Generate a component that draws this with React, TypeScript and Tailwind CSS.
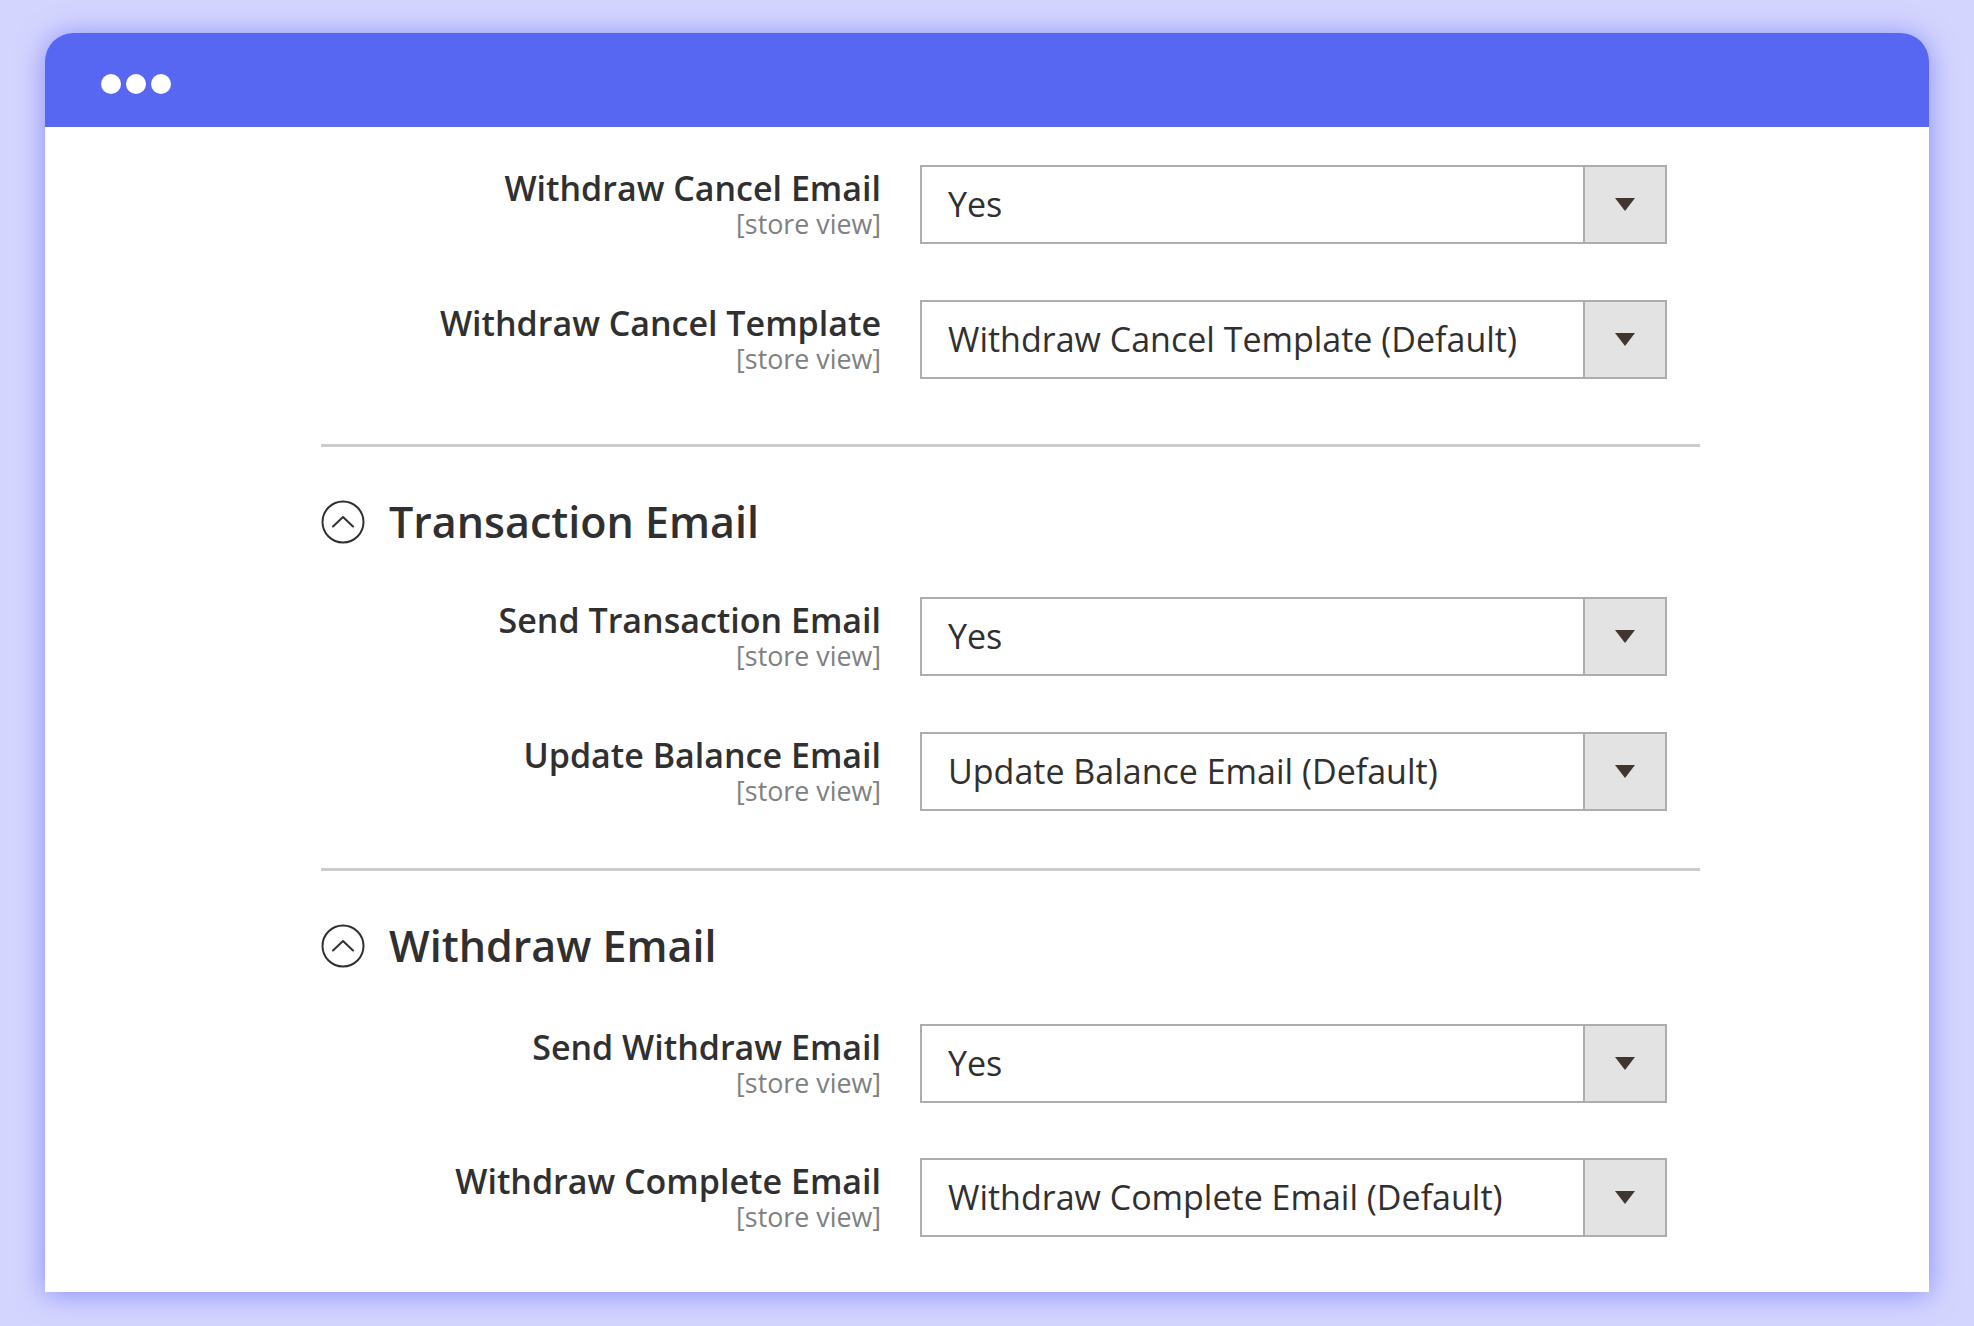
import React from "react";

const font = { fontFamily: '"Open Sans", "Noto Sans", sans-serif' };

function Row({ label, value, className = "" }: { label: string; value: string; className?: string }) {
  return (
    <div className={"flex items-start " + className}>
      <div className="w-[560px] shrink-0 text-right pt-[3px]">
        <div className="text-[34px] leading-[40px] font-semibold text-[#303030]">{label}</div>
        <div className="text-[26.8px] leading-[31px] text-[#808080]">[store view]</div>
      </div>
      <div className="ml-[39px] w-[747px] h-[79px] flex border-2 border-[#adadad] bg-white">
        <div className="flex-1 flex items-center pl-[26px] text-[34px] text-[#303030]">{value}</div>
        <div className="w-[82px] h-full border-l-2 border-[#adadad] bg-[#e3e3e3] flex items-center justify-center">
          <div className="w-0 h-0 border-l-[10px] border-r-[10px] border-t-[13px] border-l-transparent border-r-transparent border-t-[#41362f]" />
        </div>
      </div>
    </div>
  );
}

function Heading({ title, className = "" }: { title: string; className?: string }) {
  return (
    <div className={"flex items-center h-[48px] " + className}>
      <svg width="44" height="44" viewBox="0 0 44 44" className="shrink-0">
        <circle cx="22" cy="22" r="20.5" fill="none" stroke="#303030" strokeWidth="2" />
        <path d="M12 26.5 L22 17 L32 26.5" fill="none" stroke="#303030" strokeWidth="2" strokeLinecap="round" strokeLinejoin="round" />
      </svg>
      <div className="ml-[24px] text-[43px] leading-[48px] font-semibold text-[#303030]">{title}</div>
    </div>
  );
}

export default function App() {
  return (
    <div style={font} className="w-full h-[1326px] bg-[#d4d5fe] pt-[33px] pl-[45px] overflow-hidden">
      <div className="w-[1884px] h-[1259px] rounded-t-[28px] bg-white shadow-[0_2px_28px_rgba(110,118,248,0.75)] overflow-hidden">
        <div className="h-[94px] bg-[#5867f2] pt-[41px] pl-[56px] flex gap-[5px]">
          <div className="w-[20px] h-[20px] rounded-full bg-white" />
          <div className="w-[20px] h-[20px] rounded-full bg-white" />
          <div className="w-[20px] h-[20px] rounded-full bg-white" />
        </div>
        <div className="ml-[276px] w-[1379px] pt-[38px]">
          <Row label="Withdraw Cancel Email" value="Yes" />
          <Row label="Withdraw Cancel Template" value="Withdraw Cancel Template (Default)" className="mt-[56px]" />
          <div className="mt-[65px] border-t-[3px] border-[#cccccc]" />
          <Heading title="Transaction Email" className="mt-[51px]" />
          <Row label="Send Transaction Email" value="Yes" className="mt-[51px]" />
          <Row label="Update Balance Email" value="Update Balance Email (Default)" className="mt-[56px]" />
          <div className="mt-[57px] border-t-[3px] border-[#cccccc]" />
          <Heading title="Withdraw Email" className="mt-[51px]" />
          <Row label="Send Withdraw Email" value="Yes" className="mt-[54px]" />
          <Row label="Withdraw Complete Email" value="Withdraw Complete Email (Default)" className="mt-[55px]" />
        </div>
      </div>
    </div>
  );
}
